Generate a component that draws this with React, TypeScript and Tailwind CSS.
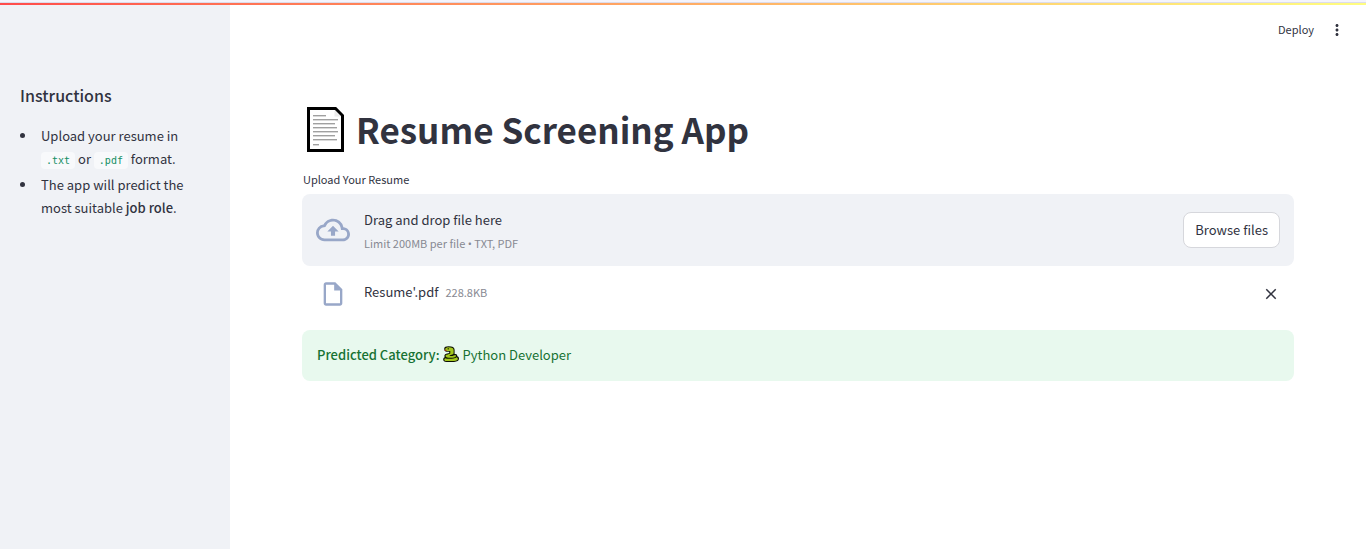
import type { ReactNode } from "react";

function PageEmoji() {
  const lines = [
    [8, 13],
    [12, 25],
    [16, 22],
    [20, 24],
    [24, 25],
    [28, 22],
    [32, 24],
    [37, 6],
  ];
  return (
    <svg viewBox="-1 -1 38 46" className="h-[46px] w-[38px] shrink-0" role="img" aria-label="Page">
      <path d="M1.500 1.500H28.500L35.500 8.500V43.500H1.500Z" fill="#fff" stroke="#000" strokeWidth="3" />
      <path d="M27.500 3V9.500H34Z" fill="#ececec" />
      {lines.map(([y, w]) => (
        <rect key={y} x="6" y={y} width={w} height="1.400" fill="#a0a0a0" />
      ))}
    </svg>
  );
}

function SnakeEmoji() {
  return (
    <svg viewBox="0 0 16 16" className="mr-1 ml-[3px] inline-block h-4 w-4 align-[-2px]" role="img" aria-label="Snake">
      <path
        d="M1.200 2.600C1.200 1 3 .2 5.500.2C9.500 .2 11.600 1.300 11.600 3.800V8H12.500C14 8 14.400 9 14.200 10.200C15.600 10.600 16 11.400 16 12.600C16 14.900 14.300 15.900 11 15.900H3.500C1.200 15.900.2 15 .2 13.400C.2 12.300.8 11.600 1.700 11.200C1 9.600 1.600 8.200 3.200 7.800L6.200 7V5.800H3.500C2 5.800 1.200 4.500 1.200 2.600Z"
        fill="#0b0f02"
      />
      <path
        d="M2.200 2.900C2.400 1.700 4 1.200 5.900 1.200C9 1.200 10.600 2 10.600 4V7.200C10.600 8.700 6.500 8.900 6.500 9.700C6.500 10.300 9.500 10.200 11 9.200H13C13.300 10.700 12 11.600 9.500 11.700H5.500C3.500 11.700 2.200 10.600 2.500 9.600C2.700 8.900 3.800 8.700 4.700 8.500L7.300 7.600V4.900H3.500C2.600 4.900 2.100 3.900 2.200 2.900Z"
        fill="#a3c71c"
      />
      <path
        d="M2.300 12.200C4 12.900 10.500 13.200 13.800 11.200C15.200 12 15.200 13.600 14 14.300C13.300 14.800 12.300 14.900 11 14.900H3.600C2.200 14.900 1.300 14.400 1.300 13.400C1.300 12.800 1.700 12.400 2.300 12.200Z"
        fill="#a3c71c"
      />
      <rect x="4.600" y="2.200" width="1.300" height="1.200" fill="#1c2502" />
      <path d="M1.600 3.800H3.600V4.900H1.600Z" fill="#a8281c" />
    </svg>
  );
}

function Icon({ d, className }: { d: string; className: string }) {
  return (
    <svg viewBox="0 0 24 24" fill="currentColor" aria-hidden="true" className={className}>
      <path d={d} />
    </svg>
  );
}

function Code({ children }: { children: ReactNode }) {
  return (
    <code className="rounded bg-[#f8f9fb] px-[5px] py-[3px] font-['DejaVu_Sans_Mono',monospace] text-[10px] leading-3 text-[#158f64]">
      {children}
    </code>
  );
}

function Bullet() {
  return <span className="mt-[9px] mr-4 h-[5px] w-[5px] shrink-0 rounded-full bg-[#31333f]" />;
}

const CLOUD =
  "M19.35 10.04A7.49 7.49 0 0 0 12 4C9.11 4 6.6 5.64 5.35 8.04A5.994 5.994 0 0 0 0 14c0 3.310 2.690 6 6 6h13c2.760 0 5-2.240 5-5 0-2.640-2.050-4.780-4.650-4.960zM19 18H6c-2.210 0-4-1.790-4-4 0-2.050 1.530-3.760 3.560-3.970l1.070-.11.5-.95A5.469 5.469 0 0 1 12 6c2.620 0 4.880 1.860 5.390 4.430l.3 1.500 1.530.11A2.980 2.980 0 0 1 22 15c0 1.650-1.350 3-3 3zM8 13h2.550v3h2.900v-3H16l-4-4-4 4z";
const FILE =
  "M14 2H6c-1.100 0-1.990.9-1.990 2L4 20c0 1.100.89 2 1.990 2H18c1.100 0 2-.9 2-2V8l-6-6zM6 20V4h7v5h5v11H6z";
const CLOSE =
  "M19 6.410L17.590 5 12 10.590 6.410 5 5 6.410 10.590 12 5 17.590 6.410 19 12 13.410 17.590 19 19 17.590 13.410 12z";
const DOTS =
  "M12 8c1.100 0 2-.9 2-2s-.9-2-2-2-2 .9-2 2 .9 2 2 2zm0 2c-1.100 0-2 .9-2 2s.9 2 2 2 2-.9 2-2-.9-2-2-2zm0 6c-1.100 0-2 .9-2 2s.9 2 2 2 2-.9 2-2-.9-2-2-2z";

export default function App() {
  return (
    <div className="flex min-h-screen flex-col bg-white font-['Noto_Sans_CJK_SC',sans-serif] text-[13px] text-[#31333f]">
      <div className="h-[3px] border-b border-[#dcdcea] bg-[#f4f4fc]" />
      <div className="h-0.5 bg-linear-to-r from-[#ff4b4b] to-[#fffd80]" />
      <div className="flex grow">
        <aside className="w-[230px] shrink-0 bg-[#f0f2f6] px-5 pt-[78px]">
          <h2 className="text-base leading-6 font-medium">Instructions</h2>
          <ul className="mt-[17px] flex flex-col gap-[3px] leading-[23px]">
            <li className="flex">
              <Bullet />
              <div>
                Upload your resume in <Code>.txt</Code> or <Code>.pdf</Code> format.
              </div>
            </li>
            <li className="flex">
              <Bullet />
              <div>
                The app will predict the most suitable <strong className="font-medium">job role</strong>.
              </div>
            </li>
          </ul>
        </aside>
        <div className="min-w-0 grow">
          <header className="flex h-12 items-center justify-end gap-[14px] pr-5">
            <button type="button" className="text-[11px] leading-4">
              Deploy
            </button>
            <button type="button" aria-label="Menu" className="pt-0.5">
              <Icon d={DOTS} className="h-[18px] w-[18px]" />
            </button>
          </header>
          <main className="px-[72px] pt-[47px]">
            <h1 className="flex items-center gap-3 pl-1 text-[35px] leading-[58px] font-bold">
              <PageEmoji />
              Resume Screening App
            </h1>
            <label htmlFor="browse" className="mt-3 block pl-px text-[11px] leading-[18px]">
              Upload Your Resume
            </label>
            <section className="mt-[6px] flex h-[72px] items-center rounded-lg bg-[#f0f2f6] px-[14px]">
              <Icon d={CLOUD} className="mr-[14px] h-[34px] w-[34px] text-[#98a7c8]" />
              <div className="grow pt-0.5">
                <p className="leading-6">Drag and drop file here</p>
                <p className="text-[11px] leading-[22px] text-[#878992]">
                  Limit 200MB per file <span className="font-['Open_Sans',sans-serif]">•</span> TXT, PDF
                </p>
              </div>
              <button
                id="browse"
                type="button"
                className="h-9 rounded-lg border border-[#d6d7dc] bg-white px-[11px] leading-5"
              >
                Browse files
              </button>
            </section>
            <div className="flex h-14 items-center pr-[14px] pl-[17px]">
              <Icon d={FILE} className="mr-[17px] h-7 w-7 text-[#98a7c8]" />
              <div className="flex grow items-baseline gap-[7px] pb-1 leading-6">
                <span>Resume'.pdf</span>
                <span className="text-[11px] text-[#878992]">228.8KB</span>
              </div>
              <button type="button" aria-label="Remove file">
                <Icon d={CLOSE} className="h-[18px] w-[18px]" />
              </button>
            </div>
            <div role="status" className="mt-2 rounded-lg bg-[#e8f9ee] px-[15px] pt-[14px] pb-[15px] leading-[22px] text-[#177233]">
              <strong className="font-medium">Predicted Category:</strong>
              <SnakeEmoji />
              Python Developer
            </div>
          </main>
        </div>
      </div>
    </div>
  );
}
